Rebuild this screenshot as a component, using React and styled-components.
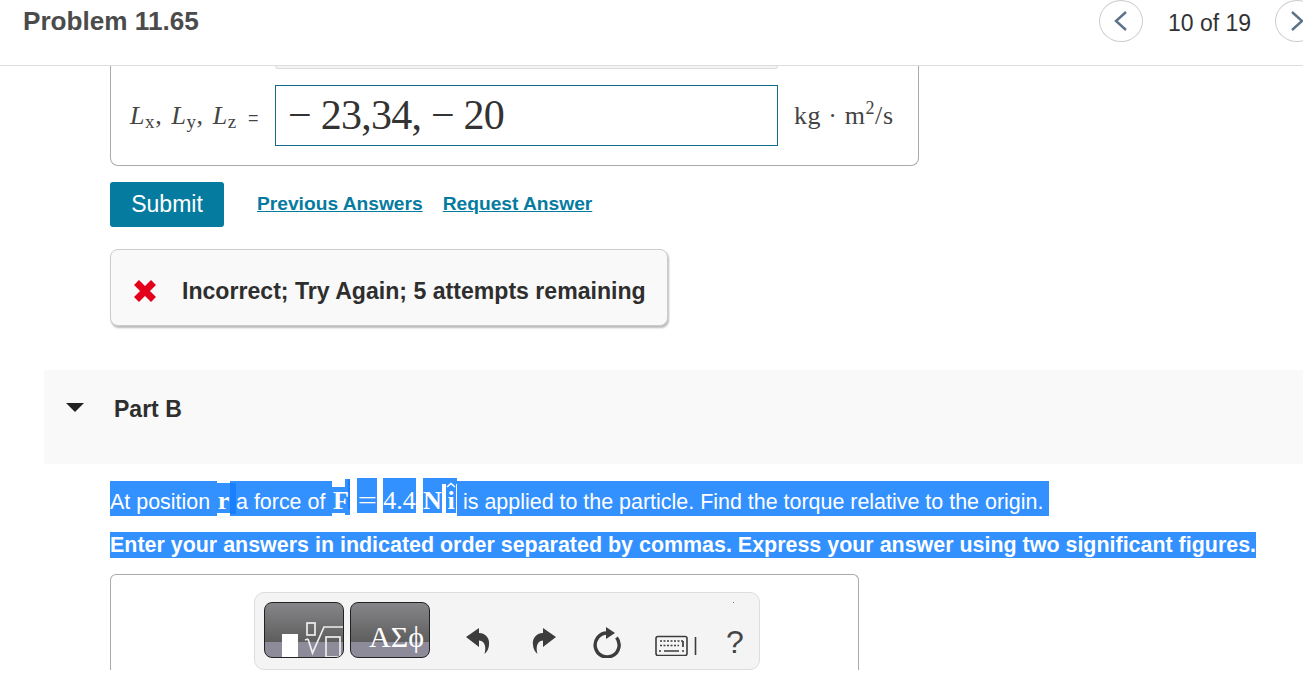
import React from "react";
import styled, { createGlobalStyle } from "styled-components";

const GlobalStyle = createGlobalStyle`
  * { box-sizing: border-box; }
  body {
    margin: 0;
    background: #fff;
    font-family: "Liberation Sans", Arial, sans-serif;
  }
`;

const Page = styled.div`
  width: 1303px;
  height: 670px;
  overflow: hidden;
`;

// Top bar
const Header = styled.header`
  height: 66px;
  display: flex;
  align-items: flex-start;
  padding-left: 23px;
  border-bottom: 1px solid #ddd;
`;

const Title = styled.h1`
  margin: 6px auto 0 0;
  font-size: 26.15px;
  line-height: 30px;
  font-weight: 700;
  color: #4b4b4b;
`;

const Pager = styled.nav`
  display: flex;
  align-items: center;
  gap: 24px;
  width: 204px;
  flex: none;
`;

const PageButton = styled.button`
  width: 44px;
  height: 42px;
  flex: none;
  padding: 0;
  display: flex;
  align-items: center;
  justify-content: center;
  background: #fff;
  border: 1px solid #ccc;
  border-radius: 50%;
`;

const PageCount = styled.span`
  flex: none;
  margin-left: 1px;
  font-size: 23px;
  color: #333;
  white-space: nowrap;
  position: relative;
  top: 2px;
`;

// Answer card, scrolled partly under the header
const AnswerCard = styled.section`
  width: 809px;
  height: 100px;
  margin-left: 110px;
  padding-left: 19px;
  border: 1px solid #aaa;
  border-top: 0;
  border-radius: 0 0 8px 8px;
`;

const ClippedBox = styled.div`
  width: 503px;
  height: 3px;
  margin-left: 145px;
  background: #f4f4f4;
  border: 1px solid #ddd;
  border-top: 0;
  border-radius: 0 0 6px 6px;
`;

const AnswerRow = styled.div`
  display: flex;
  align-items: center;
  margin-top: 16px;
`;

const Label = styled.div`
  width: 145px;
  flex: none;
  font-family: "Liberation Serif", serif;
  font-size: 26px;
  letter-spacing: 0.6px;
  word-spacing: 2px;
  color: #444;
  white-space: pre;

  i { font-style: italic; }
  sub { font-size: 19px; line-height: 0; vertical-align: -4px; }
  span { font-family: "Liberation Sans", sans-serif; font-size: 18px; margin-left: 2px; }
`;

const ValueBox = styled.div`
  width: 503px;
  height: 61px;
  flex: none;
  padding-left: 12px;
  border: 1px solid #136b8a;
  font-family: "Liberation Serif", serif;
  font-size: 42px;
  letter-spacing: -0.75px;
  line-height: 59px;
  color: #333;
  white-space: pre;
`;

const Unit = styled.div`
  margin-left: 16px;
  font-family: "Liberation Serif", serif;
  font-size: 26px;
  letter-spacing: 0.6px;
  color: #444;
  white-space: pre;

  sup { font-size: 18px; line-height: 0; }
`;

const ActionRow = styled.div`
  display: flex;
  align-items: center;
  margin: 16px 0 0 110px;
`;

const SubmitButton = styled.button`
  width: 114px;
  height: 45px;
  padding: 0;
  margin-right: 33px;
  background: #047b9f;
  border: 0;
  border-radius: 3px;
  color: #fff;
  font-family: inherit;
  font-size: 23px;
`;

const TextLink = styled.a`
  margin-right: 20px;
  color: #047b9f;
  font-size: 19.2px;
  font-weight: 700;
  text-decoration: underline;
  position: relative;
  top: -1px;
`;

const Feedback = styled.div`
  width: 558px;
  height: 77px;
  margin: 22px 0 0 110px;
  padding: 6px 0 0 22px;
  display: flex;
  align-items: center;
  gap: 25px;
  background: #f9f9f9;
  border: 1px solid #ccc;
  border-radius: 8px;
  box-shadow: 1px 2px 2px #bbb;
  font-size: 23.1px;
  font-weight: 700;
  color: #2e2e2e;
`;

const FeedbackText = styled.span`
  margin-top: 2px;
`;

// Part heading
const PartBand = styled.div`
  height: 94px;
  margin: 44px 0 0 44px;
  padding: 24px 0 0 22px;
  display: flex;
  align-items: flex-start;
  background: #f9f9f9;
`;

const Triangle = styled.div`
  width: 0;
  height: 0;
  margin-top: 9px;
  border-style: solid;
  border-width: 9px 9.5px 0;
  border-color: #222 transparent transparent;
`;

const PartTitle = styled.h2`
  margin: 1px 0 0 30px;
  font-size: 23px;
  line-height: 28px;
  font-weight: 700;
  color: #2e2e2e;
`;

// Selected question text
const SelectedLine = styled.div`
  display: flex;
  align-items: baseline;
  margin: 14px 0 0 110px;
  font-size: 21.45px;
  line-height: 20px;
  color: #fff;
  white-space: pre;
`;

const Seg = styled.span`
  position: relative;
  flex: none;
  width: ${(p) => p.$w}px;
  margin-left: ${(p) => p.$gap || 0}px;
  padding: ${(p) => p.$top ?? 11}px 0 ${(p) => p.$bottom ?? 4}px ${(p) => p.$left || 0}px;
  background: #3390ff;
`;

const MathSeg = styled(Seg)`
  font-family: "Liberation Serif", serif;
  font-size: 26px;
  font-weight: ${(p) => (p.$bold ? 700 : 400)};
  text-align: center;
`;

const WideGlyph = styled.span`
  display: inline-block;
  transform: scaleX(1.3);
`;

const Overlay = styled.span`
  position: absolute;
  left: ${(p) => p.$x}px;
  top: ${(p) => p.$y}px;
  width: ${(p) => p.$w}px;
  height: ${(p) => p.$h}px;
  background: ${(p) => p.$color || "#3390ff"};
`;

const RaisedGlyph = styled.span`
  position: relative;
`;

const HatMark = styled.svg`
  position: absolute;
  left: 0;
  top: 4px;
`;

const SelectedBold = styled.div`
  width: max-content;
  height: 26px;
  margin: 16px 0 0 110px;
  background: #3390ff;
  color: #fff;
  font-size: 21.45px;
  font-weight: 700;
  line-height: 26px;
  white-space: pre;
`;

// Answer entry panel
const EntryPanel = styled.section`
  width: 749px;
  height: 100px;
  margin: 16px 0 0 110px;
  padding: 17px 0 0 143px;
  border: 1px solid #aaa;
  border-bottom: 0;
  border-radius: 6px 6px 0 0;
`;

const Toolbar = styled.div`
  position: relative;
  width: 506px;
  height: 78px;
  padding: 9px 0 0 9px;
  display: flex;
  align-items: flex-start;
  background: #f4f4f4;
  border: 1px solid #ddd;
  border-radius: 10px;
`;

const ToolButton = styled.div`
  position: relative;
  width: 80px;
  height: 56px;
  margin-right: 6px;
  flex: none;
  overflow: hidden;
  border: 1px solid #222;
  border-radius: 8px;
  background: linear-gradient(#868589 0%, #5e5e5e 72%, #8d8b99 72%, #8d8b99 100%);
`;

const GreekLabel = styled.span`
  display: block;
  text-align: center;
  font-family: "Liberation Serif", serif;
  font-size: 30px;
  line-height: 30px;
  padding: 19px 0 0 13px;
  color: #fff;
`;

const ToolIcon = styled.span`
  display: flex;
  flex: none;
  margin-left: ${(p) => p.$gap}px;
  margin-top: ${(p) => p.$top}px;
  color: #3c3c3c;
`;

const Help = styled.span`
  margin-left: 27px;
  margin-top: 24px;
  font-size: 32px;
  line-height: 32px;
  color: #444;
`;

const Speck = styled.span`
  position: absolute;
  left: 478px;
  top: 9px;
  width: 1px;
  height: 1px;
  background: #777;
`;

const Chevron = ({ flip }) => (
  <svg width="14" height="20" viewBox="0 0 14 20" fill="none">
    <path
      d={flip ? "M2 1l10 9-10 9" : "M12 1L2 10l10 9"}
      stroke="#5b7288"
      strokeWidth="2.4"
    />
  </svg>
);

const CrossIcon = () => (
  <svg width="24" height="24" viewBox="0 0 24 24">
    <path d="M3.5 3.5l17 17M20.5 3.5l-17 17" stroke="#e2001a" strokeWidth="7" />
  </svg>
);

const RadicalIcon = () => (
  <svg width="78" height="54" viewBox="0 0 78 54" style={{ display: "block" }}>
    <rect x="17" y="31" width="16" height="24" fill="#fff" />
    <g fill="none" stroke="#eee" strokeWidth="1.7">
      <rect x="42" y="20" width="8" height="12" />
      <path d="M40 37l3-1" />
      <path d="M43 36l4.5 14L59 24h19" />
      <rect x="61" y="34" width="14" height="20" />
    </g>
  </svg>
);

const ReplyIcon = ({ flip }) => (
  <svg
    width="26"
    height="28"
    viewBox="0 0 26 28"
    style={flip ? { transform: "scaleX(-1)" } : undefined}
  >
    <path
      d="M1 10L14 1v5c7 0 11 6 10 12-.3 4-2 7-4.500 9 1.500-5 1.500-13-5.500-13.500V20z"
      fill="#3c3c3c"
    />
  </svg>
);

const RefreshIcon = () => (
  <svg width="30" height="32" viewBox="0 0 30 32" fill="none">
    <path d="M15 7A12 12 0 1 0 24.500 11.500" stroke="#3c3c3c" strokeWidth="3.4" />
    <path d="M14 1l9 6-9 6z" fill="#3c3c3c" />
  </svg>
);

const KeyboardIcon = () => (
  <svg width="44" height="21" viewBox="0 0 44 21" fill="none">
    <rect x="1" y="1.500" width="31" height="19" rx="2" stroke="#3c3c3c" strokeWidth="1.6" />
    <path d="M5 6h23M5 10.500h19" stroke="#3c3c3c" strokeWidth="1.7" strokeDasharray="2 1.500" />
    <path d="M4 16h2M9 16h15M27 16h2M28 6v6" stroke="#3c3c3c" strokeWidth="1.7" />
    <path d="M40.500 2v18" stroke="#3c3c3c" strokeWidth="1.6" />
  </svg>
);

const App = () => (
  <Page>
    <GlobalStyle />
    <Header>
      <Title>Problem 11.65</Title>
      <Pager>
        <PageButton><Chevron /></PageButton>
        <PageCount>10 of 19</PageCount>
        <PageButton><Chevron flip /></PageButton>
      </Pager>
    </Header>

    <AnswerCard>
      <ClippedBox />
      <AnswerRow>
        <Label>
          <i>L</i><sub>x</sub>, <i>L</i><sub>y</sub>, <i>L</i><sub>z</sub> <span>=</span>
        </Label>
        <ValueBox>− 23,34, − 20</ValueBox>
        <Unit>kg · m<sup>2</sup>/s</Unit>
      </AnswerRow>
    </AnswerCard>

    <ActionRow>
      <SubmitButton>Submit</SubmitButton>
      <TextLink>Previous Answers</TextLink>
      <TextLink>Request Answer</TextLink>
    </ActionRow>

    <Feedback>
      <CrossIcon />
      <FeedbackText>Incorrect; Try Again; 5 attempts remaining</FeedbackText>
    </Feedback>

    <PartBand>
      <Triangle />
      <PartTitle>Part B</PartTitle>
    </PartBand>

    <SelectedLine>
      <Seg $w={107}>At position </Seg>
      <MathSeg $w={13} $top={8} $bottom={2} $bold>r</MathSeg>
      <Seg $w={102} $left={6}>
        <Overlay $x={0} $y={2} $w={6} $h={31} $color="#1a7fff" />
        a force of 
      </Seg>
      <MathSeg $w={18} $top={4} $bottom={2} $bold>
        <Overlay $x={13} $y={-8} $w={5} $h={36} />
        <Overlay $x={16} $y={-8} $w={2} $h={30} $color="#1a7fff" />
        <RaisedGlyph>F</RaisedGlyph>
      </MathSeg>
      <MathSeg $w={20} $gap={7} $top={13} $bottom={2}><WideGlyph>=</WideGlyph></MathSeg>
      <MathSeg $w={33} $gap={6} $top={13} $bottom={2}>4.4</MathSeg>
      <MathSeg $w={19} $gap={7} $top={13} $bottom={2} $bold>
        <Overlay $x={19} $y={0} $w={15} $h={6} />
        <RaisedGlyph>N</RaisedGlyph>
      </MathSeg>
      <MathSeg $w={10} $gap={4} $top={13} $bottom={2} $bold>
        <HatMark width="10" height="6" viewBox="0 0 10 6" fill="none">
          <path d="M1 5l4-3.500L9 5" stroke="#fff" strokeWidth="1.6" />
        </HatMark>
        i
      </MathSeg>
      <Seg $w={592} $gap={1} $left={6}>is applied to the particle. Find the torque relative to the origin.</Seg>
    </SelectedLine>
    <SelectedBold>Enter your answers in indicated order separated by commas. Express your answer using two significant figures.</SelectedBold>

    <EntryPanel>
      <Toolbar>
        <ToolButton><RadicalIcon /></ToolButton>
        <ToolButton><GreekLabel>ΑΣϕ</GreekLabel></ToolButton>
        <ToolIcon $gap={29} $top={25}><ReplyIcon /></ToolIcon>
        <ToolIcon $gap={40} $top={25}><ReplyIcon flip /></ToolIcon>
        <ToolIcon $gap={35} $top={24}><RefreshIcon /></ToolIcon>
        <ToolIcon $gap={33} $top={33}><KeyboardIcon /></ToolIcon>
        <Help>?</Help>
        <Speck />
      </Toolbar>
    </EntryPanel>
  </Page>
);

export default App;
